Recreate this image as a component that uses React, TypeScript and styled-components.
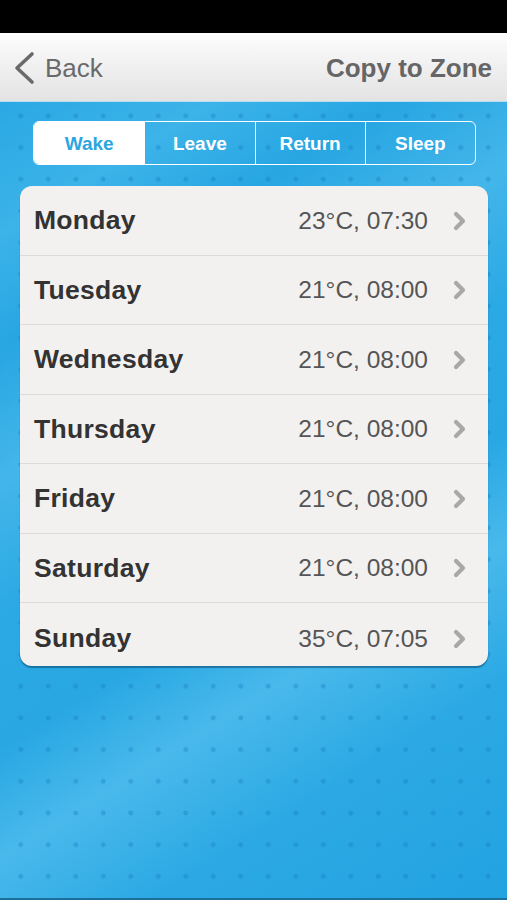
import React, { useState } from 'react';
import styled, { createGlobalStyle } from 'styled-components';

const GlobalStyle = createGlobalStyle`
  html, body {
    margin: 0;
    padding: 0;
    background: #000;
  }
  body {
    font-family: "Liberation Sans", Arial, Helvetica, sans-serif;
    -webkit-font-smoothing: antialiased;
  }
`;

const Screen = styled.div`
  width: 507px;
  height: 900px;
  display: flex;
  flex-direction: column;
  overflow: hidden;
`;

const StatusBar = styled.div`
  height: 33px;
  background: #000;
  flex: none;
`;

const NavBar = styled.div`
  height: 69px;
  flex: none;
  display: flex;
  align-items: center;
  justify-content: space-between;
  padding: 2px 15px 0 13px;
  background: linear-gradient(180deg, #fdfdfd 0%, #f1f1f1 45%, #e3e3e3 100%);
  border-bottom: 1px solid #b9dff0;
  box-sizing: border-box;
`;

const BackButton = styled.button`
  display: flex;
  align-items: center;
  gap: 10px;
  border: 0;
  background: none;
  padding: 0;
  font: inherit;
  font-size: 26px;
  color: #6a6a6a;
  cursor: pointer;
`;

const NavAction = styled.button`
  border: 0;
  background: none;
  padding: 0;
  font: inherit;
  font-size: 26px;
  font-weight: bold;
  color: #666;
  cursor: pointer;
`;

const Main = styled.main`
  flex: 1;
  display: flex;
  flex-direction: column;
  padding: 19px 19px 0 20px;
  box-sizing: border-box;
  border-bottom: 2px solid #1b6f98;
  background-color: #2ba9e4;
  background-image:
    radial-gradient(circle, rgba(20, 120, 190, 0.35) 0 2.2px, transparent 2.8px),
    linear-gradient(
      148deg,
      #2aa8e3 0%,
      #3cb3e9 12%,
      #27a6e2 22%,
      #44b6ea 34%,
      #2ba9e4 46%,
      #28a7e3 58%,
      #49b9eb 68%,
      #2ca9e4 80%,
      #22a3e1 100%
    );
  background-size: 27.5px 31.7px, 100% 100%;
  background-position: 7px -2px, 0 0;
`;

const Segments = styled.div`
  display: grid;
  grid-template-columns: repeat(4, 1fr);
  margin: 0 12px 0 13px;
  height: 44px;
  border: 1.5px solid #fff;
  border-radius: 6px;
  overflow: hidden;
  box-sizing: border-box;
`;

const Segment = styled.button<{ $active: boolean }>`
  border: 0;
  border-left: 1.5px solid #fff;
  padding: 2px 0 0;
  font: inherit;
  font-size: 19px;
  font-weight: bold;
  cursor: pointer;
  background: ${(p) => (p.$active ? '#fff' : 'transparent')};
  color: ${(p) => (p.$active ? '#2ba6e0' : '#fff')};

  &:first-child {
    border-left: 0;
  }
`;

const Card = styled.div`
  margin-top: 21px;
  background: #f3f1f0;
  border-radius: 12px;
  overflow: hidden;
  box-shadow: 0 2px 1px rgba(10, 70, 110, 0.55);
`;

const Row = styled.div<{ $last?: boolean }>`
  display: flex;
  align-items: center;
  height: ${(p) => (p.$last ? '63px' : '69.5px')};
  padding: ${(p) => (p.$last ? '8px 21px 0 14px' : '1px 21px 0 14px')};
  box-sizing: border-box;
  border-bottom: ${(p) => (p.$last ? '0' : '1px solid #dddad9')};
  cursor: pointer;
`;

const Day = styled.span`
  flex: 1;
  font-size: 26.5px;
  font-weight: bold;
  color: #333;
  letter-spacing: 0.3px;
`;

const Value = styled.span`
  font-size: 24.5px;
  color: #555;
  margin-right: 25px;
`;

const BackChevron = () => (
  <svg width="22" height="34" viewBox="0 0 22 34">
    <polyline points="19,3 4,17 19,31" fill="none" stroke="#6a6a6a" strokeWidth="3.6" strokeLinecap="round" strokeLinejoin="round" />
  </svg>
);

const RowChevron = () => (
  <svg width="14" height="20" viewBox="0 0 14 20">
    <polyline points="3,3 10,10 3,17" fill="none" stroke="#a8a8a8" strokeWidth="4.2" strokeLinecap="round" strokeLinejoin="round" />
  </svg>
);

const periods = ['Wake', 'Leave', 'Return', 'Sleep'];

const days = [
  { day: 'Monday', value: '23°C, 07:30' },
  { day: 'Tuesday', value: '21°C, 08:00' },
  { day: 'Wednesday', value: '21°C, 08:00' },
  { day: 'Thursday', value: '21°C, 08:00' },
  { day: 'Friday', value: '21°C, 08:00' },
  { day: 'Saturday', value: '21°C, 08:00' },
  { day: 'Sunday', value: '35°C, 07:05' },
];

export default function App() {
  const [period, setPeriod] = useState('Wake');
  return (
    <Screen>
      <GlobalStyle />
      <StatusBar />
      <NavBar>
        <BackButton>
          <BackChevron />
          Back
        </BackButton>
        <NavAction>Copy to Zone</NavAction>
      </NavBar>
      <Main>
        <Segments>
          {periods.map((p) => (
            <Segment key={p} $active={p === period} onClick={() => setPeriod(p)}>
              {p}
            </Segment>
          ))}
        </Segments>
        <Card>
          {days.map((d, i) => (
            <Row key={d.day} $last={i === days.length - 1}>
              <Day>{d.day}</Day>
              <Value>{d.value}</Value>
              <RowChevron />
            </Row>
          ))}
        </Card>
      </Main>
    </Screen>
  );
}
